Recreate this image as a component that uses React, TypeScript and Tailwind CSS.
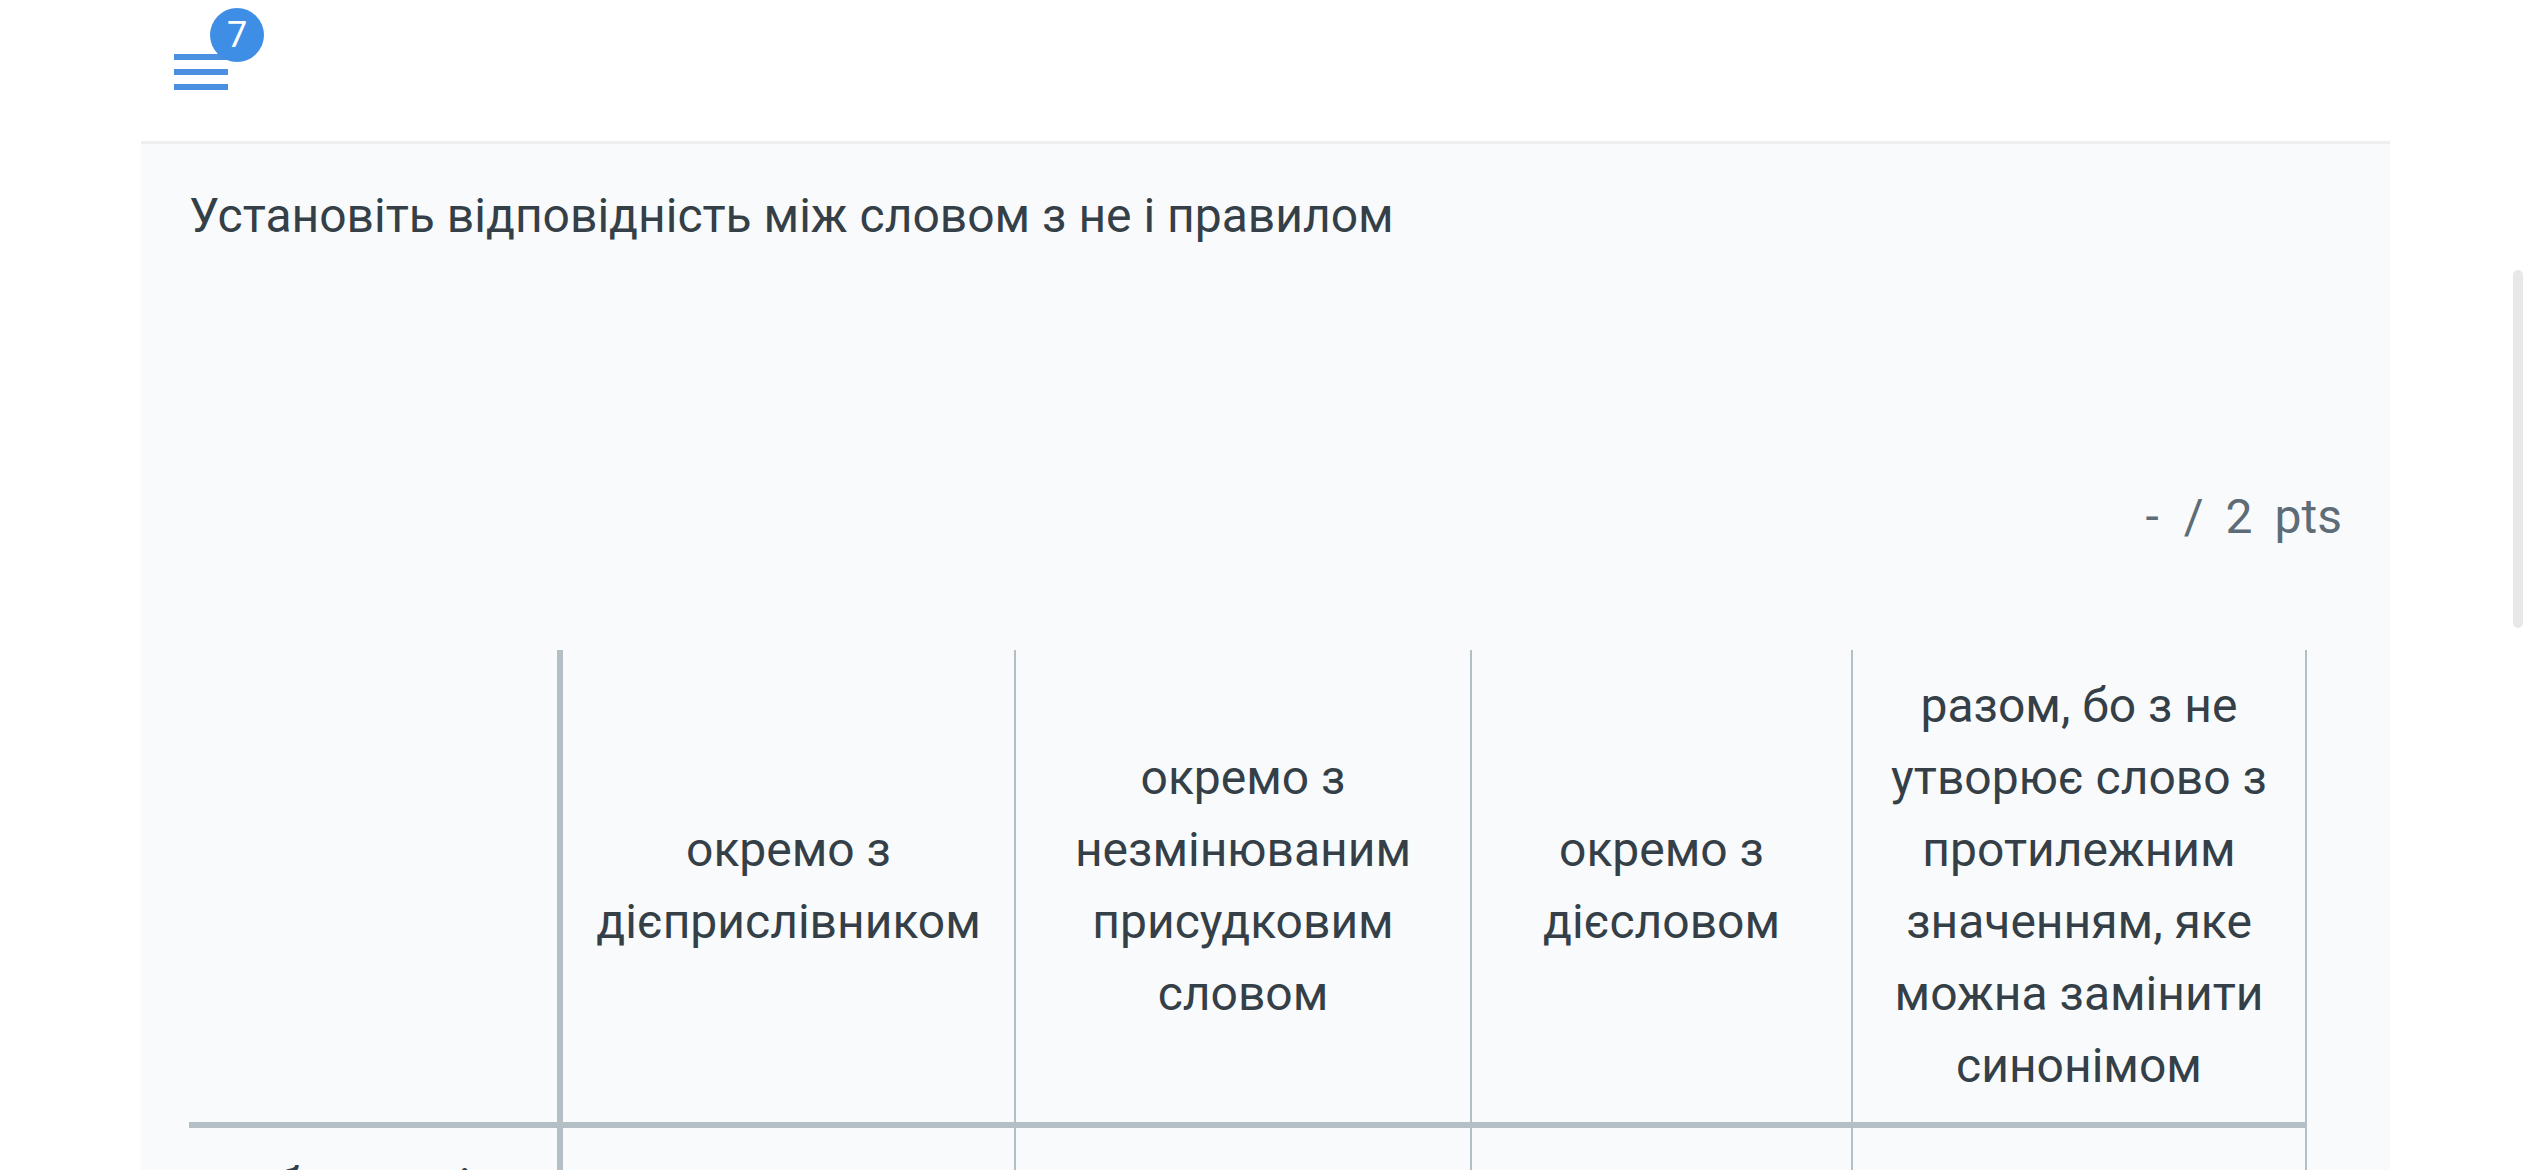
import React from 'react';

const headers = [
  'окремо з дієприслівником',
  'окремо з незмінюваним присудковим словом',
  'окремо з дієсловом',
  'разом, бо з не утворює слово з протилежним значенням, яке можна замінити синонімом',
];

function App() {
  return (
    <div
      className="relative h-[1170px] w-[2532px] overflow-hidden bg-white text-[#353f47]"
      style={{ fontFamily: 'Roboto, "Noto Sans", sans-serif' }}
    >
      {/* Top bar */}
      <header className="h-[141px] pl-[174px] pt-[54px]">
        <button className="relative flex w-[54px] flex-col gap-[9px]">
          <span className="block h-[6px] w-[54px] bg-[#4a8fe0]" />
          <span className="block h-[6px] w-[54px] bg-[#4a8fe0]" />
          <span className="block h-[6px] w-[54px] bg-[#4a8fe0]" />
          <span className="absolute left-[36px] top-[-46px] flex h-[54px] w-[54px] items-center justify-center rounded-full bg-[#3f8ee6] text-[36px] leading-none text-white">
            7
          </span>
        </button>
      </header>

      {/* Question panel */}
      <main className="ml-[141px] w-[2249px] border-t-[3px] border-[#eeeeee] bg-[#f8fafb] pl-[48px] pr-[48px] pt-[36px]">
        <h1 className="text-[48px] font-normal leading-[72px]">
          Установіть відповідність між словом з не і правилом
        </h1>

        <div className="mt-[229px] flex justify-end gap-[22px] text-[48px] leading-[72px] text-[#5d6c77]">
          <span className="mr-[3px]">-</span>
          <span>/</span>
          <span>2</span>
          <span>pts</span>
        </div>

        {/* Matching grid */}
        <div className="mt-[97px] grid w-[2118px] grid-cols-[374px_453px_456px_381px_454px] text-[48px] leading-[72px] text-[#353f47]">
          <div className="border-b-[6px] border-r-[6px] border-[#b4bfc5]" />
          {headers.map((h) => (
            <div
              key={h}
              className="flex items-center justify-center border-b-[6px] border-r-2 border-[#b4bfc5] px-[30px] py-[20px] text-center"
            >
              {h}
            </div>
          ))}

          <div className="flex justify-center border-r-[6px] border-[#b4bfc5] px-[20px] pb-[20px] pt-[22px] text-center">
            безпечні
          </div>
          <div className="h-[200px] border-r-2 border-[#b4bfc5]" />
          <div className="border-r-2 border-[#b4bfc5]" />
          <div className="border-r-2 border-[#b4bfc5]" />
          <div className="border-r-2 border-[#b4bfc5]" />
        </div>
      </main>

      {/* Scrollbar */}
      <div className="absolute left-[2513px] top-[270px] h-[358px] w-[10px] rounded-full bg-[#e8e8e8]" />
    </div>
  );
}

export default App;
